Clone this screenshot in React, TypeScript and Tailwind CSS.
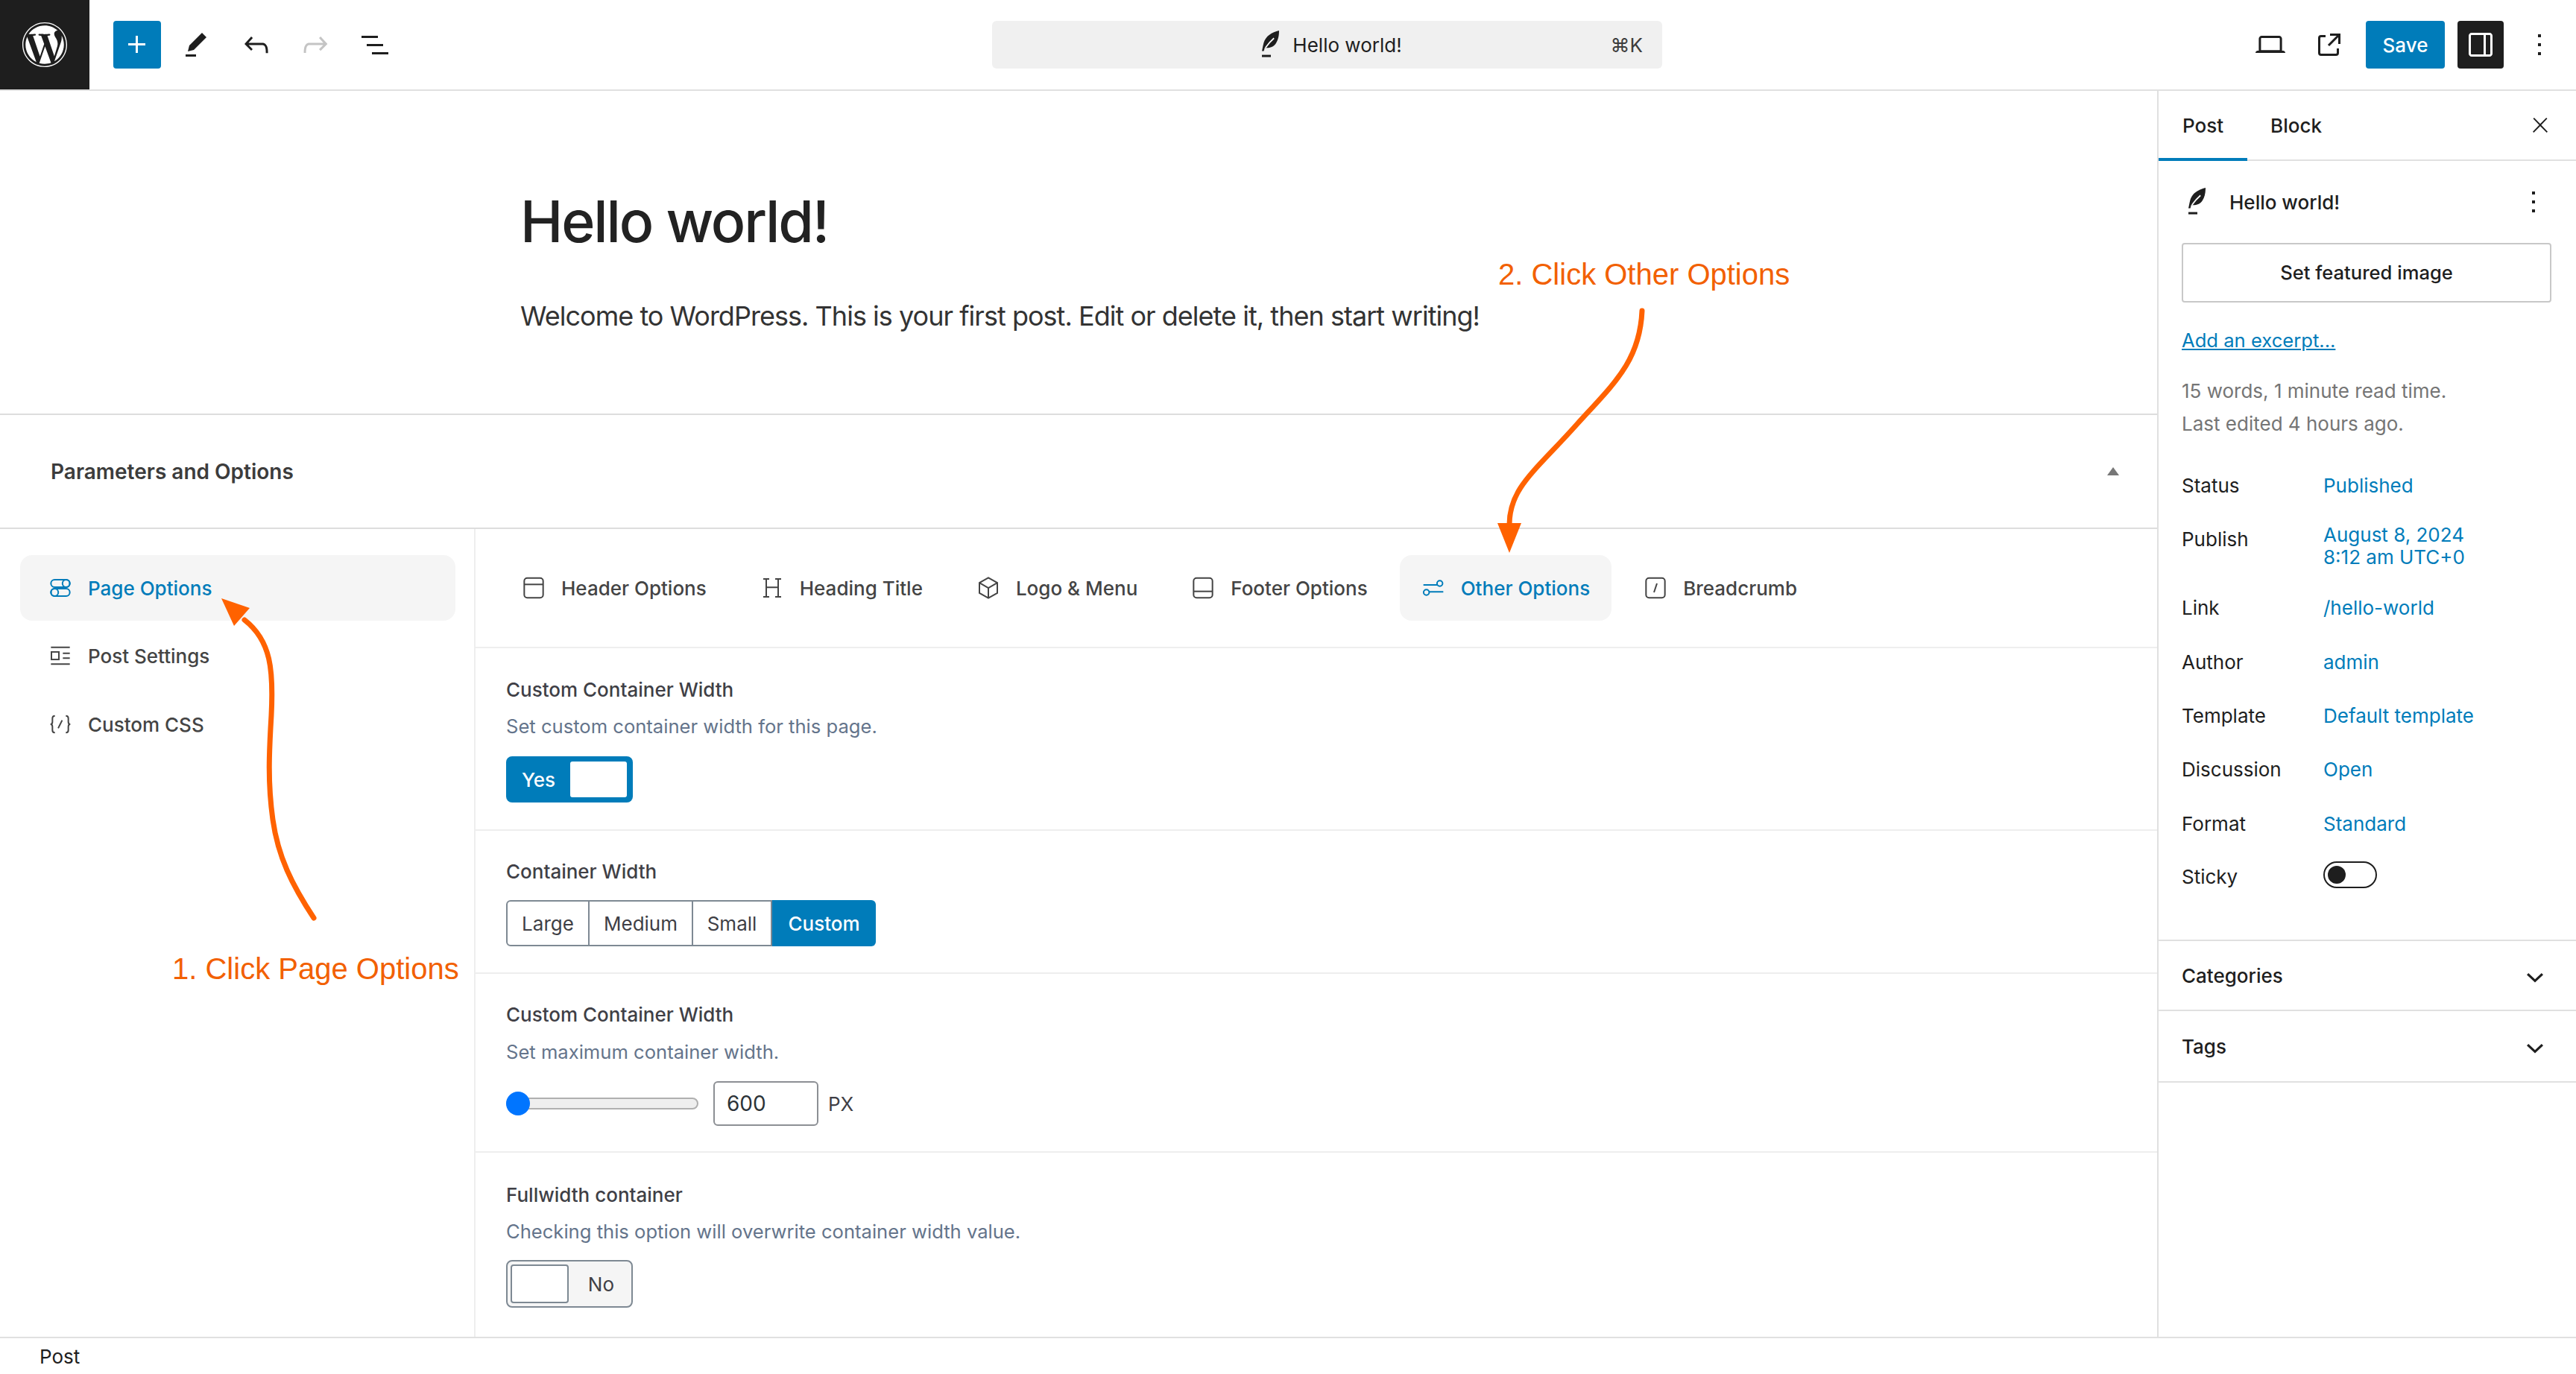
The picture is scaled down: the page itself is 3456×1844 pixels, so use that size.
import React from "react";
import { FaWordpress } from "react-icons/fa";

function Wp({ d, className }: { d: string; className?: string }) {
  return (
    <svg viewBox="0 0 24 24" fill="currentColor" className={className}>
      <path d={d} />
    </svg>
  );
}

function Feather({ className }: { className?: string }) {
  return (
    <svg viewBox="0 0 24 24" className={className}>
      <path fill="#1e1e1e" d="M18 2.500c-4.800 1.200-9 3.600-10.300 8.300-.5 1.800-.7 3.500-1.200 5.400h1.300l.6-2.200c2.600.5 5.600-.3 7.400-2.800 1.700-2.500 2.200-5.300 2.200-8.700z" />
      <path stroke="#fff" strokeWidth="0.900" fill="none" d="M8.900 14c1.600-2.300 3.500-4.500 5.700-6.400" />
      <path fill="#1e1e1e" d="M6.500 18.800h6v1.500h-6z" />
    </svg>
  );
}

const icons: Record<string, React.ReactNode> = {
  page: (
    <>
      <rect x="2.500" y="3.800" width="19" height="7.400" rx="3.700" />
      <circle cx="17.800" cy="7.500" r="3.700" />
      <rect x="2.500" y="12.800" width="19" height="7.400" rx="3.700" />
      <circle cx="6.200" cy="16.500" r="3.700" />
    </>
  ),
  post: (
    <>
      <path d="M2.500 3.500h19M2.500 20.500h19M14.500 9.500h7M14.500 14.500h7" />
      <rect x="3" y="8.200" width="7.500" height="7.600" />
    </>
  ),
  css: (
    <>
      <path d="M6.500 3.500c-2 0-2.500 1-2.500 2.500v3.500c0 1.500-.5 2.500-2 2.500 1.500 0 2 1 2 2.500V18c0 1.500.5 2.500 2.500 2.500" />
      <path d="M17.500 3.500c2 0 2.500 1 2.500 2.500v3.500c0 1.500.5 2.500 2 2.500-1.500 0-2 1-2 2.500V18c0 1.500-.5 2.500-2.500 2.500" />
      <path d="M9.800 16l4-8" />
    </>
  ),
  header: (
    <>
      <rect x="2.500" y="2" width="19" height="20" rx="3" />
      <path d="M2.500 8.500h19" />
    </>
  ),
  heading: <path d="M3 3h6M6 3v18M3 21h6M15 3h6M18 3v18M15 21h6M6 11.500h12" />,
  cube: (
    <>
      <path d="M12 1.800l9 5.100v10.200l-9 5.100-9-5.100V6.900z" />
      <path d="M3 6.900l9 5.200 9-5.200M12 12.100v10" />
    </>
  ),
  footer: (
    <>
      <rect x="2.500" y="2" width="19" height="20" rx="3" />
      <path d="M2.500 15.500h19" />
    </>
  ),
  other: (
    <>
      <path d="M2 9h14M8 16h14" />
      <circle cx="18.500" cy="7.500" r="2.800" />
      <circle cx="5" cy="16.500" r="2.800" />
    </>
  ),
  crumb: (
    <>
      <rect x="2.500" y="2" width="19" height="20" rx="3" />
      <path d="M10.500 16.500l3-9" />
    </>
  ),
};

function Glyph({ name, className }: { name: string; className?: string }) {
  return (
    <svg viewBox="0 0 24 24" fill="none" stroke="currentColor" strokeWidth="1.500" className={className}>
      {icons[name]}
    </svg>
  );
}

const sideMenu = [
  { icon: "page", label: "Page Options", active: true },
  { icon: "post", label: "Post Settings", active: false },
  { icon: "css", label: "Custom CSS", active: false },
];

const tabs = [
  { icon: "header", label: "Header Options" },
  { icon: "heading", label: "Heading Title" },
  { icon: "cube", label: "Logo & Menu" },
  { icon: "footer", label: "Footer Options" },
  { icon: "other", label: "Other Options", active: true },
  { icon: "crumb", label: "Breadcrumb" },
];

const meta = [
  { label: "Status", value: "Published", h: "h-[72px]" },
  { label: "Publish", value: "August 8, 2024\n8:12 am UTC+0", h: "h-[92px]" },
  { label: "Link", value: "/hello-world", h: "h-[73px]" },
  { label: "Author", value: "admin", h: "h-[72px]" },
  { label: "Template", value: "Default template", h: "h-[72px]" },
  { label: "Discussion", value: "Open", h: "h-[73px]" },
  { label: "Format", value: "Standard", h: "h-[72px]" },
];

const sizes = [
  { label: "Large", w: "w-[112px]" },
  { label: "Medium", w: "w-[139px]" },
  { label: "Small", w: "w-[106px]" },
];

export default function App() {
  return (
    <div className="relative flex h-screen w-screen flex-col overflow-hidden bg-white font-['Inter',sans-serif] text-[26px] text-[#1e1e1e]">
      {/* top bar */}
      <header className="flex h-[122px] shrink-0 items-center border-b-2 border-[#e0e0e0]">
        <div className="flex w-[1331px] items-center">
          <div className="flex h-[120px] w-[120px] items-center justify-center bg-[#1e1e1e] text-white">
            <FaWordpress className="h-[62px] w-[62px]" />
          </div>
          <div className="ml-8 flex h-16 w-16 items-center justify-center rounded-[4px] bg-[#007cba] text-white">
            <Wp d="M11 12.5V17.5H12.5V12.5H17.5V11H12.5V6H11V11H6V12.500H11Z" className="h-12 w-12" />
          </div>
          <Wp d="m19 7-3-3-8.500 8.500-1 4 4-1L19 7Zm-7 11.500H5V20h7v-1.500Z" className="ml-[23px] h-12 w-12" />
          <Wp d="M18.300 11.700c-.6-.6-1.400-.9-2.300-.9H6.700l2.900-3.300-1.100-1-4.500 5L8.500 16l1-1-2.700-2.700H16c.5 0 .9.2 1.300.5 1 1 1 3.400 1 4.500v.3h1.500v-.2c0-1.500 0-4.300-1.500-5.700z" className="ml-[33px] h-12 w-12" />
          <Wp d="M15.600 6.500l-1.100 1 2.900 3.300H8c-.9 0-1.700.3-2.300.9-1.400 1.500-1.400 4.200-1.400 5.600v.2h1.500v-.3c0-1.100 0-3.500 1-4.500.3-.3.7-.5 1.300-.5h9.200L14.500 15l1.100 1.100 4.600-4.600-4.600-5z" className="ml-[31px] h-12 w-12 text-[#c4c4c4]" />
          <Wp d="M3 6h11v1.500H3V6Zm3.500 5.500h11V13h-11v-1.500ZM21 17H10v1.500h11V17Z" className="ml-[32px] h-12 w-12" />
        </div>
        <div className="relative flex h-16 w-[899px] items-center justify-center rounded-[6px] bg-[#f0f0f0]">
          <div className="flex items-center gap-[6px]">
            <Feather className="h-12 w-12" />
            <span>Hello world!</span>
          </div>
          <span className="absolute right-[26px] text-[#3c3c3c]">⌘K</span>
        </div>
        <div className="flex flex-1 items-center justify-end pr-[25px]">
          <Wp d="M20.500 16h-.7V8c0-1.100-.9-2-2-2H6.200c-1.100 0-2 .9-2 2v8h-.7c-.8 0-1.500.7-1.500 1.500h20c0-.8-.7-1.500-1.500-1.500zM5.700 8c0-.3.2-.5.5-.5h11.600c.3 0 .5.2.5.5v7.600H5.700V8z" className="h-12 w-12" />
          <Wp d="M19.500 4.500h-7V6h4.440l-5.970 5.970 1.060 1.060L18 7.060v4.440h1.500v-7Zm-13 1a2 2 0 0 0-2 2v10a2 2 0 0 0 2 2h10a2 2 0 0 0 2-2v-3H17v3a.5.5 0 0 1-.5.5h-10a.5.5 0 0 1-.5-.5v-10a.5.5 0 0 1 .5-.5h3V5.500h-3Z" className="ml-[31px] h-12 w-12" />
          <button className="ml-[25px] flex h-16 w-[106px] items-center justify-center rounded-[4px] bg-[#007cba] font-medium text-white">
            Save
          </button>
          <div className="ml-[17px] flex h-16 w-[62px] items-center justify-center rounded-[4px] bg-[#1e1e1e] text-white">
            <Wp d="M18 4H6c-1.100 0-2 .9-2 2v12c0 1.100.9 2 2 2h12c1.100 0 2-.9 2-2V6c0-1.100-.9-2-2-2zm-4 14.500H6c-.3 0-.5-.2-.5-.5V6c0-.3.2-.5.5-.5h8v13zm4.500-.5c0 .3-.2.500-.5.500h-2.500v-13H18c.3 0 .5.2.5.5v12z" className="h-12 w-12" />
          </div>
          <Wp d="M13 19h-2v-2h2v2zm0-6h-2v-2h2v2zm0-6h-2V5h2v2z" className="ml-[24px] h-12 w-12" />
        </div>
      </header>

      <div className="flex min-h-0 flex-1">
        {/* editor column */}
        <main className="flex min-w-0 flex-1 flex-col">
          <div className="h-[433px] shrink-0 pl-[698px] pt-[125px]">
            <h1 className="text-[77px] leading-[100px] font-medium tracking-[-0.028em] text-[#222]">Hello world!</h1>
            <p className="mt-[52px] text-[36px] leading-[50px] tracking-[-0.027em] text-[#333]">
              Welcome to WordPress. This is your first post. Edit or delete it, then start writing!
            </p>
          </div>

          <div className="flex h-[155px] shrink-0 items-center justify-between border-y-2 border-[#ddd] pl-[68px] pr-[51px]">
            <span className="font-semibold text-[28px] text-[#3c3c3c]">Parameters and Options</span>
            <span className="h-0 w-0 border-x-[8px] border-b-[11px] border-x-transparent border-b-[#777]" />
          </div>

          <div className="flex min-h-0 flex-1">
            <nav className="flex w-[638px] shrink-0 flex-col border-r-2 border-[#eee] pl-[27px] pr-[25px] pt-[35px]">
              {sideMenu.map((m) => (
                <div
                  key={m.label}
                  className={
                    m.active
                      ? "flex h-[88px] items-center gap-[21px] rounded-[16px] bg-[#f5f5f5] pl-[38px] font-medium text-[#007cba]"
                      : "mt-[2px] flex h-[90px] items-center gap-[21px] pl-[38px] font-medium text-[#444]"
                  }
                >
                  <Glyph name={m.icon} className="h-8 w-8" />
                  <span>{m.label}</span>
                </div>
              ))}
            </nav>

            <div className="flex min-w-0 flex-1 flex-col">
              <div className="flex h-[160px] shrink-0 items-center gap-[14px] border-b-2 border-[#eee] pl-[33px]">
                {tabs.map((t) => (
                  <div
                    key={t.label}
                    className={
                      t.active
                        ? "flex h-[88px] items-center gap-[21px] rounded-[16px] bg-[#f5f5f5] px-[29px] font-medium text-[#007cba]"
                        : "flex h-[88px] items-center gap-[21px] px-[29px] font-medium text-[#444]"
                    }
                  >
                    <Glyph name={t.icon} className="h-8 w-8" />
                    <span>{t.label}</span>
                  </div>
                ))}
              </div>

              <section className="h-[245px] shrink-0 border-b-2 border-[#eee] pl-[41px] pt-[40px]">
                <h3 className="font-medium leading-8 text-[#3f3f46]">Custom Container Width</h3>
                <p className="mt-[17px] text-[25.6px] leading-8 text-[#64748b]">Set custom container width for this page.</p>
                <div className="mt-[24px] flex h-[62px] w-[170px] items-center justify-between rounded-[8px] bg-[#007cba] pl-[21px] pr-2 text-white">
                  <span className="font-medium">Yes</span>
                  <span className="h-[48px] w-[76px] rounded-[3px] bg-white" />
                </div>
              </section>

              <section className="h-[192px] shrink-0 border-b-2 border-[#eee] pl-[41px] pt-[39px]">
                <h3 className="font-medium leading-8 text-[#3f3f46]">Container Width</h3>
                <div className="mt-[22px] flex h-[62px] w-[496px] text-[#3f3f46]">
                  {sizes.map((s, i) => (
                    <span
                      key={s.label}
                      className={
                        i === 0
                          ? "flex h-full items-center justify-center rounded-l-[6px] border-2 border-[#7e8993] " + s.w
                          : "flex h-full items-center justify-center border-y-2 border-r-2 border-[#7e8993] " + s.w
                      }
                    >
                      {s.label}
                    </span>
                  ))}
                  <span className="flex h-full flex-1 items-center justify-center rounded-r-[6px] bg-[#007cba] font-medium text-white">
                    Custom
                  </span>
                </div>
              </section>

              <section className="h-[240px] shrink-0 border-b-2 border-[#eee] pl-[41px] pt-[39px]">
                <h3 className="font-medium leading-8 text-[#3f3f46]">Custom Container Width</h3>
                <p className="mt-[18px] text-[25.6px] leading-8 text-[#64748b]">Set maximum container width.</p>
                <div className="mt-[23px] flex h-[60px] items-center">
                  <div className="relative h-4 w-[258px] rounded-full border-2 border-[#b0b0b0] bg-[#efefef]">
                    <span className="absolute -left-[2px] -top-[10px] h-8 w-8 rounded-full bg-[#0075ff]" />
                  </div>
                  <div className="ml-5 flex h-[60px] w-[141px] items-center rounded-[6px] border-2 border-[#8c8f94] pl-4 text-[28px] text-[#2c3338]">
                    600
                  </div>
                  <span className="ml-[13px] text-[#3f3f46]">PX</span>
                </div>
              </section>

              <section className="flex-1 pl-[41px] pt-[41px]">
                <h3 className="font-medium leading-8 text-[#3f3f46]">Fullwidth container</h3>
                <p className="mt-[17px] text-[25.6px] leading-8 text-[#64748b]">Checking this option will overwrite container width value.</p>
                <div className="mt-[22px] flex h-16 w-[170px] items-center justify-between rounded-[8px] border-2 border-[#7e8993] bg-[#f5f5f5] pl-1 pr-[23px] text-[#3f3f46]">
                  <span className="h-[52px] w-[78px] rounded-[4px] border-2 border-[#7e8993] bg-white" />
                  <span>No</span>
                </div>
              </section>
            </div>
          </div>
        </main>

        {/* settings sidebar */}
        <aside className="flex w-[562px] shrink-0 flex-col border-l-2 border-[#e0e0e0]">
          <div className="relative flex h-[94px] shrink-0 items-center border-b-2 border-[#e0e0e0] pl-[31px] font-medium">
            <span className="ml-[1px]">Post</span>
            <span className="ml-[63px]">Block</span>
            <span className="absolute bottom-[-2px] left-0 h-1 w-[119px] bg-[#007cba]" />
            <Wp d="M13 11.800l6.100-6.300-1-1-6.100 6.200-6.100-6.200-1 1 6.100 6.300-6.500 6.700 1 1 6.500-6.600 6.500 6.600 1-1z" className="absolute right-[26px] h-11 w-11 p-[6px]" />
          </div>

          <div className="relative flex h-[110px] shrink-0 items-center pl-[27px]">
            <Feather className="h-12 w-12" />
            <span className="ml-[20px] font-medium">Hello world!</span>
            <Wp d="M13 19h-2v-2h2v2zm0-6h-2v-2h2v2zm0-6h-2V5h2v2z" className="absolute right-[33px] h-12 w-12" />
          </div>

          <div className="ml-[31px] flex h-20 w-[496px] shrink-0 items-center justify-center rounded-[4px] border-2 border-[#c8c8c8] font-medium text-[25.6px] text-[#1e1e1e]">
            Set featured image
          </div>
          <a className="ml-[31px] mt-[32px] text-[25.6px] text-[#007cba] underline">Add an excerpt...</a>
          <p className="ml-[31px] mt-[27px] leading-[44px] text-[#757575]">
            15 words, 1 minute read time.
            <br />
            Last edited 4 hours ago.
          </p>

          <div className="ml-[31px] mt-[25px] flex flex-col">
            {meta.map((m) => (
              <div key={m.label} className={"flex shrink-0 " + m.h}>
                <span className="w-[190px] pt-[20px] leading-8">{m.label}</span>
                <span className={m.value.includes("\n") ? "whitespace-pre-line pt-[15px] leading-[30px] text-[#007cba]" : "pt-[20px] leading-8 text-[#007cba]"}>
                  {m.value}
                </span>
              </div>
            ))}
            <div className="flex h-[68px] shrink-0">
              <span className="w-[190px] pt-[19px] leading-8">Sticky</span>
              <span className="mt-[14px] flex h-9 w-[72px] items-center rounded-full border-2 border-[#1e1e1e] pl-[4px]">
                <span className="h-6 w-6 rounded-full bg-[#1e1e1e]" />
              </span>
            </div>
          </div>

          <div className="mt-[51px] flex h-[96px] shrink-0 items-center justify-between border-y-2 border-[#e0e0e0] pl-[31px] pr-[31px] font-medium">
            <span>Categories</span>
            <Wp d="M17.500 11.600L16.400 10.500 12 14.600 7.600 10.500 6.500 11.600l5.500 5.200 5.500-5.200z" className="h-12 w-12" />
          </div>
          <div className="flex h-[96px] shrink-0 items-center justify-between border-b-2 border-[#e0e0e0] pl-[31px] pr-[31px] font-medium">
            <span>Tags</span>
            <Wp d="M17.500 11.600L16.400 10.500 12 14.600 7.600 10.500 6.500 11.600l5.500 5.200 5.500-5.200z" className="h-12 w-12" />
          </div>
        </aside>
      </div>

      <footer className="flex h-[50px] shrink-0 items-center border-t-2 border-[#e0e0e0] pl-[53px] text-[#1e1e1e]">Post</footer>

      {/* hand-drawn annotations over the page */}
      <span className="absolute left-[2010px] top-[344px] font-['Liberation_Sans',sans-serif] text-[40px] leading-[48px] text-[#f26000]">
        2. Click Other Options
      </span>
      <span className="absolute left-[231px] top-[1276px] font-['Liberation_Sans',sans-serif] text-[40px] leading-[48px] text-[#f26000]">
        1. Click Page Options
      </span>
      <svg className="pointer-events-none absolute left-0 top-0 h-full w-full" viewBox="0 0 3456 1844" fill="none">
        <path
          d="M421 1232C392 1188 373 1150 366 1100C359 1050 361 1010 364 960C367 900 364 860 328 832"
          stroke="#ff6200"
          strokeWidth="7"
          strokeLinecap="round"
        />
        <path d="M297 803L335 816L314 840Z" fill="#ff6200" />
        <path
          d="M2203 417C2200 485 2165 515 2116 569C2060 632 2024 655 2025 706"
          stroke="#ff6200"
          strokeWidth="7"
          strokeLinecap="round"
        />
        <path d="M2009 702H2041L2025 742Z" fill="#ff6200" />
      </svg>
    </div>
  );
}
